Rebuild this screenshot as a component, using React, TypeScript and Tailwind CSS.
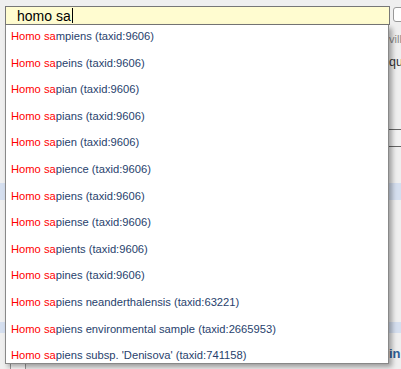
import React from 'react';

const suggestions = [
  'mpiens (taxid:9606)',
  'peins (taxid:9606)',
  'pian (taxid:9606)',
  'pians (taxid:9606)',
  'pien (taxid:9606)',
  'pience (taxid:9606)',
  'piens (taxid:9606)',
  'piense (taxid:9606)',
  'pients (taxid:9606)',
  'pines (taxid:9606)',
  'piens neanderthalensis (taxid:63221)',
  'piens environmental sample (taxid:2665953)',
  "piens subsp. 'Denisova' (taxid:741158)",
];

function PageBehind() {
  return (
    <div className="flex h-[369px] flex-col bg-[#efefef] pt-[7px] font-['Liberation_Sans',Arial,sans-serif]">
      <div className="flex justify-end">
        <div className="mr-[-6px] h-[15px] w-[14px] rounded-[3px] border border-[#999] bg-white" />
      </div>
      <div className="mt-[10px] pl-[389px] text-[11px] leading-[14px] text-[#888]">villa</div>
      <div className="mt-[8px] pl-[389px] text-[12.5px] leading-[16px] text-[#333]">qu</div>
      <div className="mt-[59px] ml-[389px] h-[21px] border-y border-[#666] bg-[#f2f2f2]" />
      <div className="mt-[36px] h-[20px] bg-[#d5dfef]" />
      <div className="mt-[122px] h-[14px] bg-[#d5dfef]" />
      <div className="mt-[13px] pl-[389px] text-[13px] font-bold leading-[16px] text-[#2f5f96]">in</div>
      <div className="mt-[-2px] ml-[10px] h-[10px] w-[16px] rounded-t-[3px] border border-b-0 border-[#999] bg-white" />
    </div>
  );
}

export default function App() {
  return (
    <div className="relative h-[369px] w-[401px] overflow-hidden font-['Liberation_Sans',Arial,sans-serif]">
      <PageBehind />

      <div className="absolute left-[5px] top-[6px] w-[385px]">
        <div className="flex h-[19px] items-center border border-[#777] bg-[#fffcd0] pl-[11px]">
          <span className="text-[14px] leading-[16px] text-black">homo sa</span>
          <span className="ml-[1px] h-[15px] w-[1.5px] bg-black" />
        </div>
        <div className="h-[339px] w-[384px] overflow-hidden border border-t-0 border-[#888] bg-white shadow-[3px_3px_5px_rgba(0,0,0,0.35)]">
          {suggestions.map((s) => (
            <div key={s} className="h-[26.6px] whitespace-nowrap pl-[5px] pt-[4px] text-[11.2px] leading-[14px]">
              <span className="text-[#ff0000]">Homo sa</span>
              <span className="text-[#283f6d]">{s}</span>
            </div>
          ))}
        </div>
      </div>
    </div>
  );
}
